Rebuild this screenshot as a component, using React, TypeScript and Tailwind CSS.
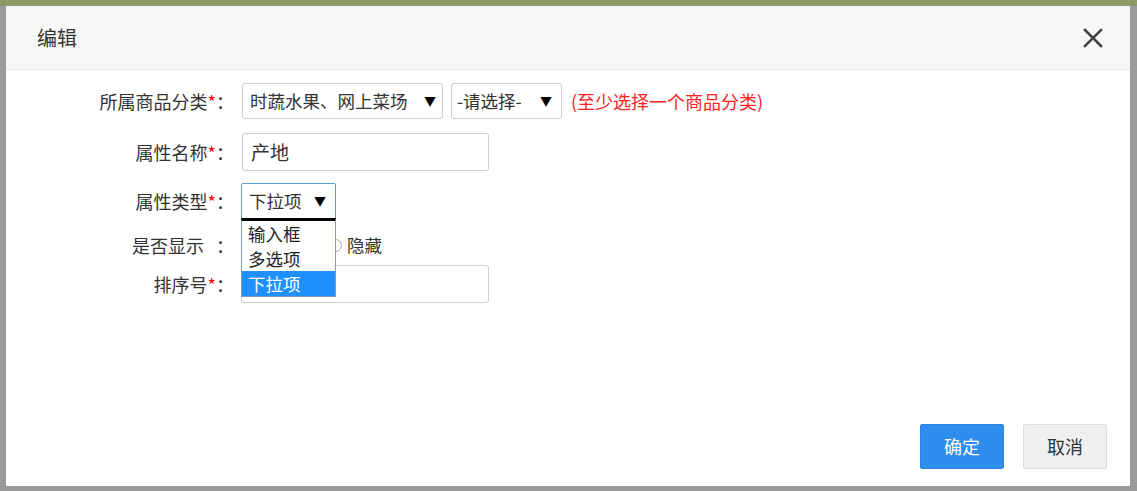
import React from 'react';

const font = { fontFamily: '"Noto Sans CJK SC", "Liberation Sans", sans-serif' };

function Label({ text, required = true }: { text: string; required?: boolean }) {
    return (
        <div className="w-[226px] shrink-0 text-right text-[18px] text-[#333] leading-none">
            {text}
            {required ? <span className="text-[#f00]">*</span> : <span className="inline-block w-[8px]" />}
            <span className="inline-block w-[16px] text-center">：</span>
        </div>
    );
}

function Arrow() {
    return <span className="text-[12px] text-black leading-none">▼</span>;
}

export default function App() {
    return (
        <div className="w-[1137px] h-[491px] bg-[#9a9a9a] flex flex-col overflow-hidden" style={font}>
            <div className="h-[6px] bg-[#8c9a66] shrink-0" />
            <div className="flex flex-1 min-h-0">
                <div className="w-[6px] shrink-0" />
                <div className="w-[1124px] h-[480px] bg-white flex flex-col">
                    {/* header */}
                    <div className="h-[64px] bg-[#f7f7f7] border-b border-[#e6e6e6] flex items-center justify-between pl-[31px] pr-[27px] shrink-0">
                        <span className="text-[20px] text-[#333]">编辑</span>
                        <svg width="20" height="20" viewBox="0 0 20 20">
                            <path d="M2 2 L18 18 M18 2 L2 18" stroke="#444" strokeWidth="2.6" strokeLinecap="square" />
                        </svg>
                    </div>

                    {/* body */}
                    <div className="flex-1 flex flex-col pt-[13px] relative">
                        {/* row 1 */}
                        <div className="flex items-center h-[36px]">
                            <Label text="所属商品分类" />
                            <div className="ml-[10px] w-[201px] h-[36px] border border-[#ccc] rounded-[3px] flex items-center justify-between pl-[7px] pr-[6px] text-[17.5px] text-[#333]">
                                <span>时蔬水果、网上菜场</span>
                                <Arrow />
                            </div>
                            <div className="ml-[8px] w-[111px] h-[36px] border border-[#ccc] rounded-[3px] flex items-center justify-between pl-[5px] pr-[9px] text-[17.5px] text-[#333]">
                                <span>-请选择-</span>
                                <Arrow />
                            </div>
                            <span className="ml-[9px] text-[18px] text-[#f22]">(至少选择一个商品分类)</span>
                        </div>

                        {/* row 2 */}
                        <div className="flex items-center h-[38px] mt-[14px]">
                            <Label text="属性名称" />
                            <div className="ml-[10px] w-[247px] h-[38px] border border-[#ccc] rounded-[3px] flex items-center pl-[8px] text-[19px] text-[#333]">
                                产地
                            </div>
                        </div>

                        {/* row 3 */}
                        <div className="flex items-center h-[36px] mt-[12px]">
                            <Label text="属性类型" />
                            <div className="relative ml-[9px]">
                                <div className="w-[95px] h-[36px] border border-[#5b9dd9] rounded-t-[2px] flex items-center justify-between pl-[7px] pr-[9px] text-[17.5px] text-[#333]">
                                    <span>下拉项</span>
                                    <Arrow />
                                </div>
                                {/* open dropdown list */}
                                <div className="absolute left-0 top-[35px] w-[95px] bg-white border border-[#7a9cc9] border-t-[3px] border-t-black z-10 flex flex-col text-[17.5px] leading-[25px] text-[#222]">
                                    <div className="pl-[6px] h-[25px]">输入框</div>
                                    <div className="pl-[6px] h-[25px]">多选项</div>
                                    <div className="pl-[6px] h-[25px] bg-[#1e90ff] text-white">下拉项</div>
                                </div>
                            </div>
                        </div>

                        {/* row 4 */}
                        <div className="flex items-center h-[20px] mt-[16px]">
                            <Label text="是否显示 " required={false} />
                            <div className="ml-[14px] flex items-center text-[17.5px] text-[#333]">
                                <span className="w-[13px] h-[13px] shrink-0 rounded-full border border-[#999] inline-block" />
                                <span className="w-[70px] shrink-0" />
                                <span className="w-[13px] h-[13px] shrink-0 rounded-full border border-[#aaa] bg-white inline-block" />
                                <span className="ml-[5px]">隐藏</span>
                            </div>
                        </div>

                        {/* row 5 */}
                        <div className="flex items-center h-[38px] mt-[10px]">
                            <Label text="排序号" />
                            <div className="ml-[9px] w-[248px] h-[38px] border border-[#ccc] rounded-[3px]" />
                        </div>

                        {/* footer */}
                        <div className="mt-auto flex justify-end gap-[19px] pr-[23px] pb-[17px]">
                            <button className="w-[84px] h-[45px] bg-[#2e8ded] text-white text-[18px] rounded-[2px] border border-[#2a84de]">
                                确定
                            </button>
                            <button className="w-[84px] h-[45px] bg-[#efefef] text-[#333] text-[18px] rounded-[2px] border border-[#dcdcdc]">
                                取消
                            </button>
                        </div>
                    </div>
                </div>
                <div className="flex-1" />
            </div>
        </div>
    );
}
